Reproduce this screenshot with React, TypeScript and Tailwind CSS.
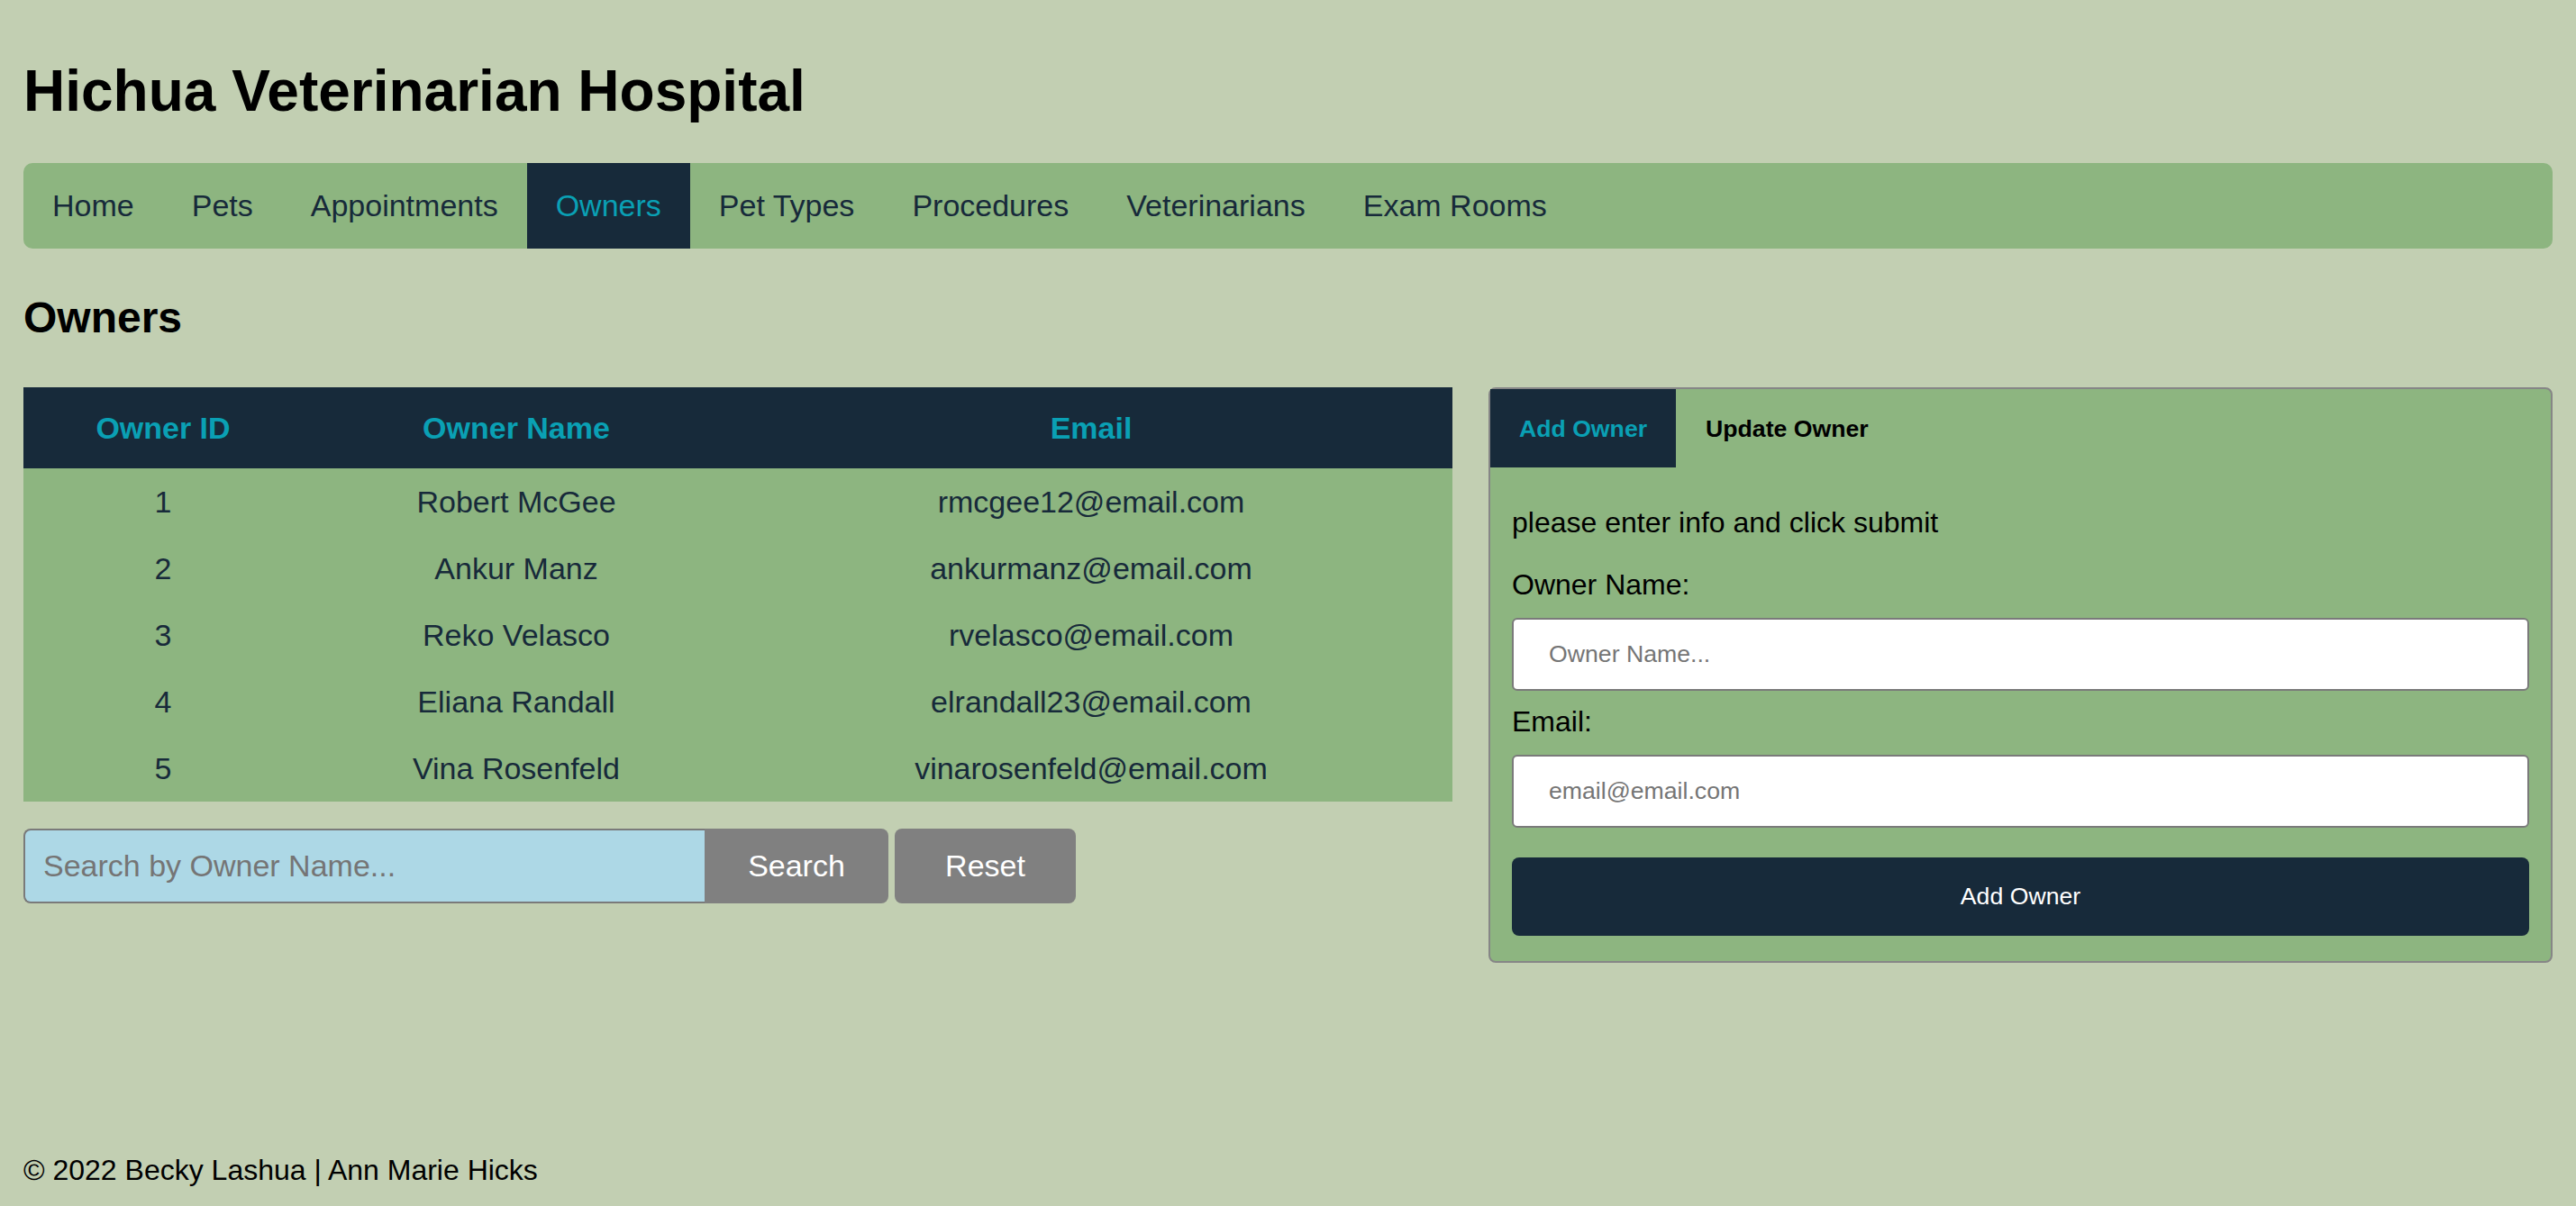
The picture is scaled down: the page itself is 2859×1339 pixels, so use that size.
import React, { useState } from 'react';

const owners = [
  { id: 1, name: 'Robert McGee', email: 'rmcgee12@email.com' },
  { id: 2, name: 'Ankur Manz', email: 'ankurmanz@email.com' },
  { id: 3, name: 'Reko Velasco', email: 'rvelasco@email.com' },
  { id: 4, name: 'Eliana Randall', email: 'elrandall23@email.com' },
  { id: 5, name: 'Vina Rosenfeld', email: 'vinarosenfeld@email.com' },
];

const navLinks = ['Home', 'Pets', 'Appointments', 'Owners', 'Pet Types', 'Procedures', 'Veterinarians', 'Exam Rooms'];

export default function App() {
  const [tab, setTab] = useState<'add' | 'update'>('add');
  const [search, setSearch] = useState('');

  return (
    <div className="min-h-screen flex flex-col bg-[#c2cfb2] px-[26px] font-['Liberation_Sans',Arial,sans-serif] text-black">
      <h1 className="pt-[65px] text-[64px] leading-[72px] font-bold">Hichua Veterinarian Hospital</h1>

      {/* Top navigation */}
      <nav className="mt-[44px] h-[95px] flex items-stretch bg-[#8db580] rounded-[10px]">
        {navLinks.map(link => (
          <a
            key={link}
            href="#"
            className={`flex items-center px-[32px] text-[34px] ${link === 'Owners' ? 'bg-[#172a3a] text-[#0aa0b4]' : 'text-[#172a3a]'}`}
          >
            {link}
          </a>
        ))}
      </nav>

      <h2 className="mt-[49px] text-[48px] leading-[56px] font-bold">Owners</h2>

      <div className="mt-[49px] flex items-start gap-[40px]">
        <div className="w-[1586px] flex flex-col">
          <table className="w-full border-collapse text-center text-[34px]">
            <thead>
              <tr className="h-[90px] bg-[#172a3a] text-[#0aa0b4]">
                <th className="w-[310px] font-bold">Owner ID</th>
                <th className="w-[474px] font-bold">Owner Name</th>
                <th className="font-bold">Email</th>
              </tr>
            </thead>
            <tbody className="bg-[#8db580] text-[#172a3a]">
              {owners.map(o => (
                <tr key={o.id} className="h-[74px]">
                  <td>{o.id}</td>
                  <td>{o.name}</td>
                  <td>{o.email}</td>
                </tr>
              ))}
            </tbody>
          </table>

          <div className="mt-[30px] flex items-center">
            <input
              value={search}
              onChange={e => setSearch(e.target.value)}
              placeholder="Search by Owner Name..."
              className="w-[756px] h-[83px] bg-[#add8e6] border-2 border-r-0 border-[#7a7a7a] rounded-l-[8px] pl-[20px] text-[34px] placeholder:text-[#757575] outline-none"
            />
            <button className="w-[204px] h-[83px] bg-[#808080] text-white text-[34px] rounded-r-[8px]">Search</button>
            <button className="ml-[7px] w-[201px] h-[83px] bg-[#808080] text-white text-[34px] rounded-[8px]">Reset</button>
          </div>
        </div>

        {/* Add / update panel */}
        <div className="flex-1 bg-[#8db580] border-2 border-[#868686] rounded-[8px] pb-[28px]">
          <div className="flex h-[87px] text-[26.67px] font-bold">
            <button
              onClick={() => setTab('add')}
              className={`w-[206px] ${tab === 'add' ? 'bg-[#172a3a] text-[#0aa0b4]' : 'text-black'}`}
            >
              Add Owner
            </button>
            <button
              onClick={() => setTab('update')}
              className={`px-[33px] ${tab === 'update' ? 'bg-[#172a3a] text-[#0aa0b4]' : 'text-black'}`}
            >
              Update Owner
            </button>
          </div>
          <div className="px-[24px] text-[32px] leading-[37px]">
            <p className="mt-[43px]">please enter info and click submit</p>
            <label className="block mt-[32px]">Owner Name:</label>
            <input
              placeholder="Owner Name..."
              className="mt-[18px] w-full h-[81px] bg-white border-2 border-[#7a7a7a] rounded-[6px] pl-[39px] text-[26.67px] placeholder:text-[#757575] outline-none"
            />
            <label className="block mt-[16px]">Email:</label>
            <input
              placeholder="email@email.com"
              className="mt-[18px] w-full h-[81px] bg-white border-2 border-[#7a7a7a] rounded-[6px] pl-[39px] text-[26.67px] placeholder:text-[#757575] outline-none"
            />
            <button className="mt-[33px] w-full h-[87px] bg-[#172a3a] text-white text-[26.67px] rounded-[8px]">
              Add Owner
            </button>
          </div>
        </div>
      </div>

      <footer className="mt-auto pb-[21px] text-[32px] leading-[37px]">© 2022 Becky Lashua | Ann Marie Hicks</footer>
    </div>
  );
}
